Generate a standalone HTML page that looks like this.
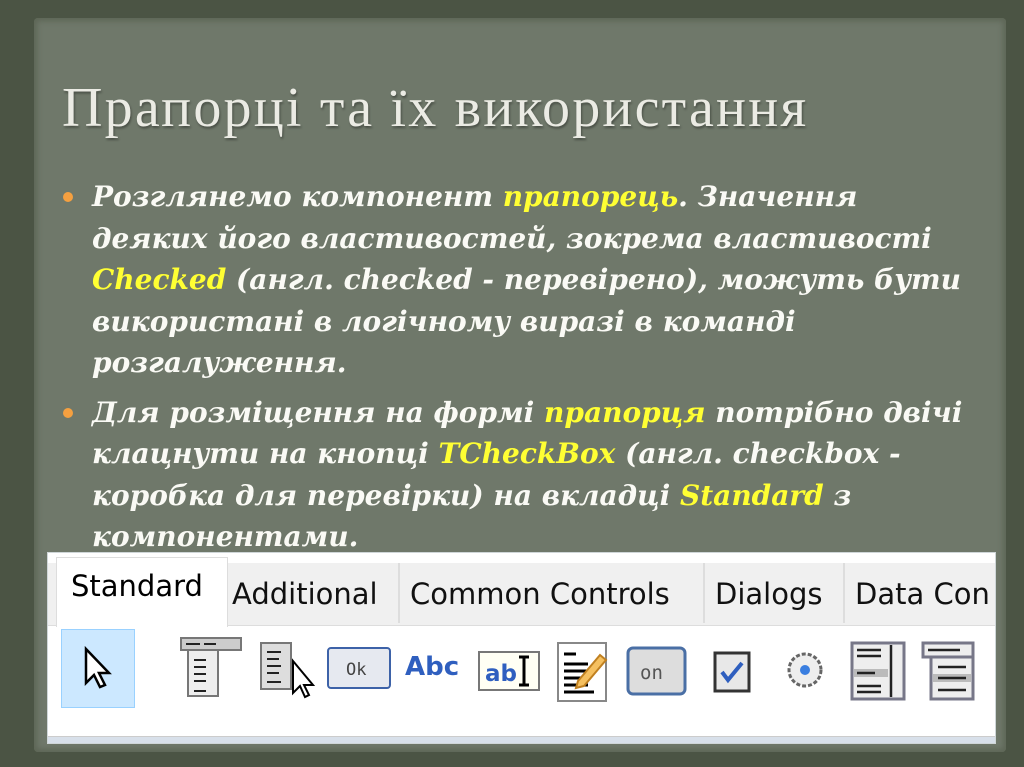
<!DOCTYPE html>
<html><head><meta charset="utf-8"><style>
body{margin:0;width:1024px;height:767px;background:#4b5444;position:relative;overflow:hidden;font-family:"Liberation Serif",serif}
.paper{position:absolute;left:34px;top:18px;width:972px;height:734px;background:#6f786a;border-radius:4px;box-shadow:0 0 6px 3px #5d6656 inset}
h1{position:absolute;left:62px;top:76px;margin:0;font-weight:normal;font-size:56px;color:#ebebe4;letter-spacing:2.2px;text-shadow:1px 2px 2px rgba(0,0,0,.35);white-space:nowrap}
.txt{position:absolute;left:92px;top:176px;width:920px;font-family:"DejaVu Serif",serif;font-size:28px;font-weight:bold;font-style:italic;color:#fafaf5;line-height:41.5px;white-space:nowrap}
.txt p{margin:0 0 8px 0;position:relative}
.txt p:before{content:"";position:absolute;left:-29px;top:16px;width:10px;height:10px;border-radius:50%;background:#f5a040}
.y{color:#ffff33}
.panel{position:absolute;left:47px;top:552px;width:949px;height:192px;background:#fff;border:1px solid #cfd6d8;box-sizing:border-box;overflow:hidden;font-family:"DejaVu Sans","Liberation Sans",sans-serif}
.tabs{position:absolute;left:0;top:10px;height:62px;width:100%;background:#f0f0f0;border-bottom:1px solid #ddd}
.tab{position:absolute;top:0;height:60px;font-size:29px;color:#111;line-height:62px;border-right:2px solid #ddd;padding-left:10px;box-sizing:border-box}
.sel{position:absolute;left:8px;top:4px;width:172px;height:70px;background:#fff;border:1px solid #ddd;border-bottom:none;font-size:29px;line-height:56px;padding-left:14px;box-sizing:border-box;font-family:"DejaVu Sans",sans-serif}
.ico{position:absolute}
</style></head><body>
<div class="paper"></div>
<h1>Прапорці та їх використання</h1>
<div class="txt">
<p>Розглянемо компонент <span class="y">прапорець</span>. Значення<br>деяких його властивостей, зокрема властивості<br><span class="y">Checked</span> (англ. checked - перевірено), можуть бути<br>використані в логічному виразі в команді<br>розгалуження.</p>
<p>Для розміщення на формі <span class="y">прапорця</span> потрібно двічі<br>клацнути на кнопці <span class="y">TCheckBox</span> (англ. checkbox -<br>коробка для перевірки) на вкладці <span class="y">Standard</span> з<br>компонентами.</p>
</div>
<div class="panel">
 <div class="tabs">
  <div class="tab" style="left:174px;width:178px">Additional</div>
  <div class="tab" style="left:352px;width:305px">Common Controls</div>
  <div class="tab" style="left:657px;width:140px">Dialogs</div>
  <div class="tab" style="left:797px;width:200px">Data Con</div>
 </div>
 <div class="sel">Standard</div>
 <div class="ico" style="left:13px;top:76px;width:72px;height:77px;background:#cce8ff;border:1px solid #99d1ff"></div>
 <svg class="ico" style="left:0;top:66px" width="949" height="90" viewBox="0 0 949 90">
  <path d="M38 30v34l8-8 6 12 5-2-6-12h10z" fill="#fff" stroke="#000" stroke-width="2.5"/>
  <rect x="133" y="19" width="60" height="12" fill="#ccc" stroke="#777" stroke-width="2"/>
  <rect x="140" y="31" width="30" height="46" fill="#eee" stroke="#777" stroke-width="2"/>
  <path d="M146 41h12M146 48h12M146 55h12M146 62h12M146 72h12M138 25h14M156 25h12" stroke="#222" stroke-width="2"/>
  <rect x="213" y="24" width="30" height="46" fill="#ddd" stroke="#777" stroke-width="2"/>
  <path d="M219 33h14M219 40h12M219 47h14M219 54h12M219 63h14" stroke="#222" stroke-width="2"/>
  <path d="M245 42v32l7-7 5 11 4-2-5-10h9z" fill="#fff" stroke="#000" stroke-width="2"/>
  <rect x="280" y="29" width="62" height="40" rx="3" fill="#e6e9f0" stroke="#3d62a8" stroke-width="2"/>
  <text x="298" y="56" font-size="17" fill="#444" font-family="DejaVu Sans Mono">Ok</text>
  <text x="357" y="56" font-size="26" font-weight="bold" fill="#2f5fbf" font-family="DejaVu Sans">Abc</text>
  <rect x="431" y="33" width="60" height="38" fill="#fffff4" stroke="#777" stroke-width="2"/>
  <text x="437" y="62" font-size="23" font-weight="bold" fill="#2f5fbf" font-family="DejaVu Sans">ab</text>
  <path d="M476 38v28M471 38h10M471 66h10" stroke="#000" stroke-width="3"/>
  <rect x="510" y="24" width="48" height="58" fill="#fff" stroke="#888" stroke-width="2"/>
  <path d="M516 35h12M516 45h24M516 52h24M516 59h24M516 66h24M516 73h30" stroke="#000" stroke-width="3"/>
  <path d="M530 62l22-26 6 5-22 26-8 2z" fill="#f5c060" stroke="#c08020" stroke-width="2"/>
  <rect x="580" y="29" width="57" height="46" rx="5" fill="#ddd" stroke="#4a6fa5" stroke-width="3"/>
  <text x="592" y="60" font-size="19" fill="#555" font-family="DejaVu Sans Mono">on</text>
  <rect x="667" y="34" width="34" height="38" fill="#e8e8e8" stroke="#333" stroke-width="3"/>
  <path d="M674 53l6 8 14-17" fill="none" stroke="#2f5fbf" stroke-width="4"/>
  <circle cx="757" cy="51" r="16" fill="#eee" stroke="#666" stroke-width="3" stroke-dasharray="4 2"/>
  <circle cx="757" cy="51" r="5" fill="#3a7ee0"/>
  <rect x="804" y="24" width="52" height="56" fill="#eee" stroke="#778" stroke-width="3"/>
  <rect x="806" y="50" width="34" height="8" fill="#bbb"/>
  <path d="M809 31h24M809 37h24M809 54h18M809 67h24M809 73h24M843 26v52" stroke="#222" stroke-width="2.5"/>
  <rect x="875" y="24" width="50" height="14" fill="#eee" stroke="#778" stroke-width="3"/>
  <rect x="883" y="38" width="42" height="42" fill="#eee" stroke="#778" stroke-width="3"/>
  <rect x="885" y="55" width="38" height="8" fill="#bbb"/>
  <path d="M880 31h32M890 48h28M890 59h28M890 71h28" stroke="#222" stroke-width="2.5"/>
 </svg>
 <div style="position:absolute;left:0;bottom:0;width:100%;height:6px;background:#d8e0ea;border-top:1px solid #ccc"></div>
</div>
</body></html>
